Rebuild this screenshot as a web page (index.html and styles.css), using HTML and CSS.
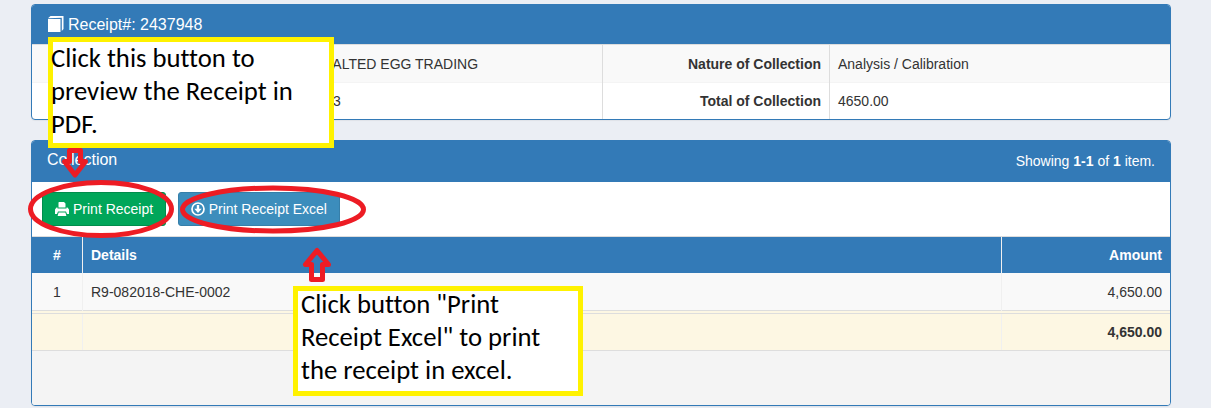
FILE: index.html
```html
<!DOCTYPE html>
<html lang="en">
<head>
<meta charset="utf-8">
<title>Receipt</title>
<link rel="stylesheet" href="styles.css">
</head>
<body>
<main class="page">
  <section class="panel receipt">
    <header class="panel-head receipt-head">
      <svg class="icon-book" viewBox="0 0 16 16"><path fill="#fff" d="M0 3h12.500v13H0zM0 2.300L2.500 0H15.500V13L13.800 15V1.800z"/></svg>
      <span>Receipt#: 2437948</span>
    </header>
    <div class="detail-row striped">
      <div class="customer">SALTED EGG TRADING</div>
      <div class="label">Nature of Collection</div>
      <div class="value">Analysis / Calibration</div>
    </div>
    <div class="detail-row">
      <div class="customer customer-no">3</div>
      <div class="label">Total of Collection</div>
      <div class="value">4650.00</div>
    </div>
  </section>

  <section class="panel collection">
    <header class="panel-head collection-head">
      <span>Collection</span>
      <span class="summary">Showing <b>1-1</b> of <b>1</b> item.</span>
    </header>
    <div class="toolbar">
      <button class="btn btn-green"><svg class="icon" viewBox="0 0 14 14"><path fill="#fff" d="M4 0h5l1.500 1.500V5.500H3.500V.5zM0 7.500L1.500 5.500h1v1h9v-1h1L14 7.500V12h-2l-1-2.500H3L2 12H0zM3.600 10.500h6.800l1 3.500H2.600z"/></svg>Print Receipt</button>
      <button class="btn btn-blue"><svg class="icon" viewBox="0 0 14 14"><circle cx="7" cy="7" r="6" fill="none" stroke="#fff" stroke-width="1.700"/><path fill="#fff" d="M5.800 3h2.400v3.800h2.500L7 11 3.300 6.800h2.500z"/></svg>Print Receipt Excel</button>
    </div>
    <div class="grid-row grid-head"><div>#</div><div>Details</div><div>Amount</div></div>
    <div class="grid-row grid-item"><div>1</div><div>R9-082018-CHE-0002</div><div>4,650.00</div></div>
    <div class="grid-row grid-total"><div></div><div></div><div>4,650.00</div></div>
    <footer class="panel-foot"></footer>
  </section>
</main>

<aside class="note note-pdf"><p>Click this button to<br>preview the Receipt in<br>PDF.</p></aside>
<aside class="note note-excel"><p>Click button "Print<br>Receipt Excel" to print<br>the receipt in excel.</p></aside>
<svg class="marks" viewBox="0 0 1211 408">
  <ellipse cx="101" cy="209" rx="70.500" ry="26.500"/>
  <ellipse cx="273" cy="209.500" rx="90.500" ry="21.500"/>
  <path d="M69.500 150.500H80.500V161.500H85.500L75 175L64.500 161.500H69.500Z"/>
  <path d="M317 250.500L305.500 264.500H311.500V279.500H322.500V264.500H328.500Z"/>
</svg>
</body>
</html>
```
FILE: styles.css
```css
* { box-sizing: border-box; }
body {
  margin: 0;
  height: 408px;
  overflow: hidden;
  background: #ebeef4;
  color: #333;
  font: 14px/20px "Liberation Sans", Arial, sans-serif;
}
.page { padding: 4px 40px 0 31px; }
.panel {
  border: 1px solid #337ab7;
  border-radius: 4px;
  overflow: hidden;
  background: #fff;
  box-shadow: 0 1px 1px rgba(0,0,0,.05);
}
.receipt { height: 116px; margin-bottom: 20px; }
.collection { height: 266px; }
.panel-head { display: flex; background: #337ab7; color: #fff; font-size: 16px; }
.receipt-head { height: 39px; align-items: center; gap: 4px; padding-left: 16px; }
.icon-book { width: 16px; height: 16px; margin-top: -2px; }
.detail-row {
  display: grid;
  grid-template-columns: 570px 227px 1fr;
  height: 37px;
  border-top: 1px solid #f4f4f4;
  line-height: 36px;
}
.striped { height: 38px; background: #f9f9f9; border-top-color: #ddd; line-height: 38px; }
.customer { padding-left: 291px; }
.customer-no { padding-left: 301px; }
.label { padding-right: 8px; border-left: 1px solid #ddd; text-align: right; font-weight: bold; }
.value { padding-left: 8px; border-left: 1px solid #ddd; }
.collection-head { height: 41px; justify-content: space-between; padding: 9px 15px 0; }
.summary { padding-top: 1px; font-size: 14px; }
.toolbar { display: flex; gap: 12px; height: 55px; padding: 10px; border-bottom: 1px solid #ddd; }
.btn {
  display: flex;
  align-items: center;
  gap: 4px;
  height: 34px;
  padding: 0 12px;
  border: 1px solid #008d4c;
  border-radius: 3px;
  background: #00a65a;
  color: #fff;
  font: inherit;
  white-space: nowrap;
}
.btn-blue { gap: 3.5px; border-color: #367fa9; background: #3c8dbc; }
.icon { width: 14px; height: 14px; flex: none; }
.grid-row { display: grid; grid-template-columns: 50px 919px 1fr; line-height: 36px; }
.grid-row > div { padding: 0 8px; border-left: 1px solid #f0f0f0; }
.grid-row > div:first-child { border-left: 0; text-align: center; }
.grid-row > div:last-child { text-align: right; }
.grid-head { height: 36px; background: #337ab7; color: #fff; font-weight: bold; }
.grid-item { height: 37px; background: #f9f9f9; line-height: 38px; }
.grid-total { height: 41px; border-top: 4px double #ddd; border-bottom: 1px solid #ddd; background: #fdf7e3; font-weight: bold; }
.panel-foot { height: 60px; background: #f4f4f4; }
.note {
  position: absolute;
  border: 5px solid #fff200;
  background: #fff;
  color: #000;
  font: 26.7px/33px Carlito, Calibri, Lato, sans-serif;
  font-variant-ligatures: none;
  white-space: nowrap;
}
.note p { margin: 0; }
.note-pdf { left: 48px; top: 37px; width: 286px; height: 111px; }
.note-pdf p { margin: 0 0 0 -2px; }
.note-excel { left: 293px; top: 286px; width: 290px; height: 110px; }
.note-excel p { margin: -3px 0 0 3px; }
.marks { position: absolute; left: 0; top: 0; width: 1211px; height: 408px; fill: none; stroke: #ed1c24; stroke-width: 5; stroke-linejoin: round; pointer-events: none; }
```
